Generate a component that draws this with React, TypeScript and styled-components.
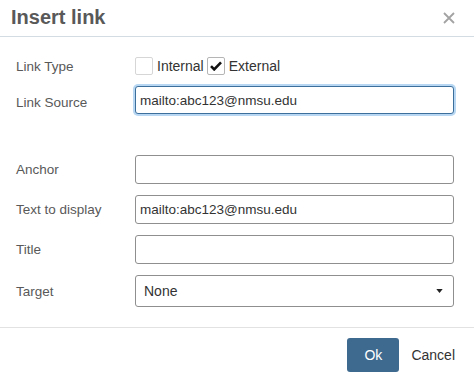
import React from 'react';
import styled, { createGlobalStyle } from 'styled-components';

const GlobalStyle = createGlobalStyle`
  html, body {
    margin: 0;
    padding: 0;
    background: #ffffff;
  }
  body {
    font-family: "Liberation Sans", Arial, sans-serif;
  }
`;

const Dialog = styled.div`
  width: 474px;
  height: 382px;
  background: #fff;
  display: flex;
  flex-direction: column;
  box-sizing: border-box;
`;

const Header = styled.div`
  height: 36px;
  border-bottom: 1px solid #d3dbe3;
  display: flex;
  align-items: center;
  justify-content: space-between;
  padding: 0 18px 0 11px;
`;

const Title = styled.h1`
  margin: 0;
  font-size: 20px;
  font-weight: bold;
  color: #595959;
  line-height: 1;
  padding-bottom: 2px;
`;

const CloseButton = styled.button`
  border: 0;
  background: none;
  padding: 0;
  width: 14px;
  height: 14px;
  display: flex;
  align-items: center;
  justify-content: center;
  cursor: pointer;
`;

const Body = styled.div`
  display: grid;
  grid-template-columns: 119px 1fr;
  row-gap: 11px;
  align-items: center;
  padding: 20px 20px 20px 16px;
  border-bottom: 1px solid #e2e2e2;
`;

const Label = styled.label<{ $low?: boolean }>`
  font-size: 13.5px;
  color: #595959;
  padding-top: ${(p) => (p.$low ? '5px' : '0')};
`;

const Spacer = styled.div`
  grid-column: 1 / 3;
  height: 19px;
`;

const Choices = styled.div`
  display: flex;
  align-items: center;
  height: 18px;
`;

const Choice = styled.span`
  display: flex;
  align-items: center;
  gap: 4px;
  margin-right: 3px;
  font-size: 14px;
  color: #333;
`;

const Box = styled.span<{ $checked?: boolean }>`
  width: 18px;
  height: 18px;
  box-sizing: border-box;
  border: 1px solid ${(p) => (p.$checked ? '#b5b5b5' : '#d6d6d6')};
  border-radius: 2px;
  display: flex;
  align-items: center;
  justify-content: center;
`;

const TextInput = styled.input<{ $focused?: boolean }>`
  box-sizing: border-box;
  width: 100%;
  height: ${(p) => (p.$focused ? '28px' : '29px')};
  padding: 0 4px;
  font-family: "Liberation Sans", Arial, sans-serif;
  font-size: 13.5px;
  color: #333;
  background: #fff;
  border: 1px solid ${(p) => (p.$focused ? '#3d6f9c' : '#8f8f8f')};
  border-radius: 3px;
  outline: none;
  box-shadow: ${(p) => (p.$focused ? '0 0 0 2px #b8d7f2' : 'none')};
`;

const Select = styled.div`
  box-sizing: border-box;
  height: 32px;
  display: flex;
  align-items: center;
  justify-content: space-between;
  padding: 0 10px 0 8px;
  border: 1px solid #8f8f8f;
  border-radius: 3px;
  font-size: 14px;
  color: #333;
`;

const Footer = styled.div`
  display: flex;
  justify-content: flex-end;
  align-items: center;
  gap: 12px;
  padding: 10px 19px 0 0;
`;

const OkButton = styled.button`
  width: 52px;
  height: 34px;
  border: 0;
  border-radius: 3px;
  background: #3e6a8f;
  color: #fff;
  font-family: "Liberation Sans", Arial, sans-serif;
  font-size: 14px;
  cursor: pointer;
`;

const CancelButton = styled.button`
  border: 0;
  background: none;
  padding: 0;
  color: #333;
  font-family: "Liberation Sans", Arial, sans-serif;
  font-size: 14px;
  cursor: pointer;
`;

export default function App() {
  return (
    <>
      <GlobalStyle />
      <Dialog>
        <Header>
          <Title>Insert link</Title>
          <CloseButton aria-label="Close">
            <svg width="12" height="12" viewBox="0 0 12 12">
              <path d="M1 1L11 11M11 1L1 11" stroke="#a3a3a3" strokeWidth="1.8" />
            </svg>
          </CloseButton>
        </Header>
        <Body>
          <Label>Link Type</Label>
          <Choices>
            <Choice>
              <Box />
              Internal
            </Choice>
            <Choice>
              <Box $checked>
                <svg width="12" height="10" viewBox="0 0 12 10">
                  <path d="M1 5.2L4.2 8.4L11 1.4" stroke="#111" strokeWidth="2.6" fill="none" />
                </svg>
              </Box>
              External
            </Choice>
          </Choices>

          <Label $low>Link Source</Label>
          <TextInput $focused readOnly value="mailto:abc123@nmsu.edu" />

          <Spacer />

          <Label>Anchor</Label>
          <TextInput readOnly value="" />

          <Label>Text to display</Label>
          <TextInput readOnly value="mailto:abc123@nmsu.edu" />

          <Label>Title</Label>
          <TextInput readOnly value="" />

          <Label>Target</Label>
          <Select>
            <span>None</span>
            <svg width="7" height="4" viewBox="0 0 8 5">
              <path d="M0 0H8L4 5Z" fill="#222" />
            </svg>
          </Select>
        </Body>
        <Footer>
          <OkButton>Ok</OkButton>
          <CancelButton>Cancel</CancelButton>
        </Footer>
      </Dialog>
    </>
  );
}
